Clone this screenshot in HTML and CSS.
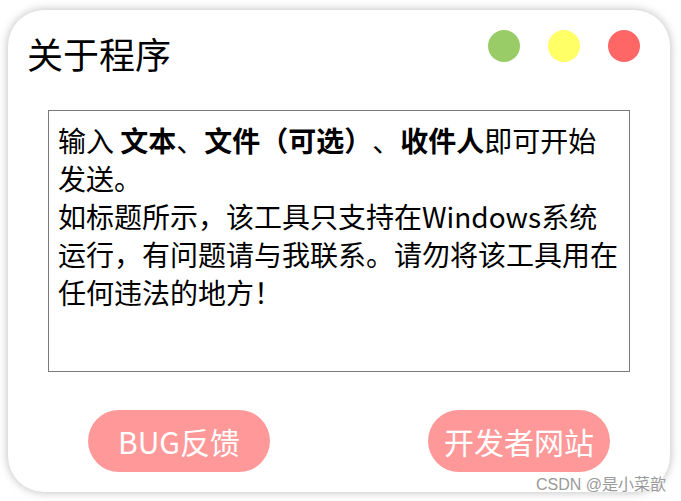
FILE: index.html
```html
<!DOCTYPE html>
<html lang="zh-CN">
<head>
<meta charset="utf-8">
<title>关于程序</title>
<link rel="stylesheet" href="styles.css">
</head>
<body>
  <div class="window">
    <header class="titlebar">
      <h1 class="title">关于程序</h1>
      <div class="dots">
        <span class="dot dot-min"></span>
        <span class="dot dot-max"></span>
        <span class="dot dot-close"></span>
      </div>
    </header>
    <div class="notice">
      <p>输入 <b>文本</b>、<b>文件（可选）</b>、<b>收件人</b>即可开始发送。</p>
      <p>如标题所示，该工具只支持在Windows系统运行，有问题请与我联系。请勿将该工具用在任何违法的地方！</p>
    </div>
    <div class="actions">
      <button class="pill">BUG反馈</button>
      <button class="pill">开发者网站</button>
    </div>
  </div>
  <span class="credit">CSDN @是小菜歆</span>
</body>
</html>
```

FILE: styles.css
```css
html, body {
  margin: 0;
  padding: 0;
}

body {
  width: 681px;
  height: 501px;
  overflow: hidden;
  background: #ffffff;
  font-family: "Noto Sans CJK SC", "Noto Sans", sans-serif;
  color: #000;
  padding: 10px 0 0 8px;
  box-sizing: border-box;
  position: relative;
  text-spacing-trim: space-all;
}

/* rounded app window */
.window {
  width: 662px;
  height: 482px;
  background: #fff;
  border-radius: 36px;
  box-shadow: 0 0 10px rgba(0, 0, 0, 0.28);
  box-sizing: border-box;
  display: flex;
  flex-direction: column;
}

.titlebar {
  display: flex;
  justify-content: space-between;
  align-items: flex-start;
  padding: 20px 30px 0 19px;
  height: 100px;
  box-sizing: border-box;
}

.title {
  margin: 5px 0 0 0;
  font-size: 36px;
  line-height: 36px;
  font-weight: normal;
}

/* window control dots */
.dots {
  display: flex;
  gap: 28px;
}

.dot {
  width: 32px;
  height: 32px;
  border-radius: 50%;
}

.dot-min { background: #99cc66; }
.dot-max { background: #ffff66; }
.dot-close { background: #ff6666; }

/* read-only notice box */
.notice {
  margin: 0 40px;
  height: 262px;
  border: 1px solid #7a7a7a;
  box-sizing: border-box;
  padding: 10px 9px;
  font-size: 28px;
  line-height: 38px;
  text-spacing-trim: space-all;
}

.notice p {
  margin: 0;
}

.notice b {
  font-weight: bold;
}

.actions {
  display: flex;
  gap: 158px;
  padding: 38px 0 0 80px;
}

.pill {
  width: 182px;
  height: 62px;
  border: none;
  border-radius: 31px;
  background: #ff9999;
  color: #fff;
  font-family: "Noto Sans CJK SC", "Noto Sans", sans-serif;
  font-size: 30px;
  line-height: 62px;
  padding: 0;
}

/* author credit in the corner */
.credit {
  position: absolute;
  right: 15px;
  bottom: 6px;
  font-family: "Liberation Sans", "Noto Sans CJK SC", sans-serif;
  font-size: 16px;
  color: #9a9a9a;
  text-shadow: 0 0 2px #fff, 0 0 2px #fff;
}
```
